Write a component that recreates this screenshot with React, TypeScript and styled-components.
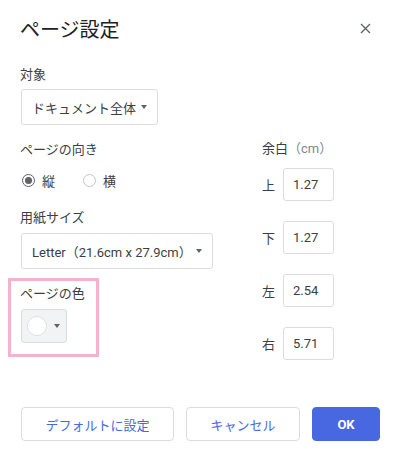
import React from 'react'
import styled, { createGlobalStyle } from 'styled-components'

const GlobalStyle = createGlobalStyle`
  html, body {
    margin: 0;
    padding: 0;
    background: #fff;
  }
  body {
    font-family: Roboto, "Noto Sans CJK JP", "Noto Sans", sans-serif;
    color: #3c4043;
  }
`

const Dialog = styled.div`
  width: 400px;
  height: 457px;
  box-sizing: border-box;
  padding: 0 20px;
  background: #fff;
`

const Header = styled.div`
  display: flex;
  justify-content: space-between;
  align-items: flex-start;
  padding-top: 18px;
`

const Title = styled.h1`
  margin: 0;
  font-size: 20px;
  line-height: 24px;
  font-weight: 400;
  color: #202124;
`

const CloseButton = styled.button`
  width: 14px;
  height: 14px;
  margin: 3px 8px 0 0;
  padding: 0;
  border: none;
  background: none;
  display: flex;
  align-items: center;
  justify-content: center;
  cursor: pointer;
`

const Body = styled.div`
  display: flex;
  margin-top: 24px;
`

const LeftColumn = styled.div`
  width: 242px;
  display: flex;
  flex-direction: column;
  align-items: flex-start;
`

const RightColumn = styled.div`
  padding-top: 74px;
  display: flex;
  flex-direction: column;
`

const Label = styled.div<{ $top?: number }>`
  font-size: 13px;
  line-height: 18px;
  color: #3c4043;
  margin-top: ${p => p.$top ?? 0}px;
`

const Muted = styled.span`
  color: #80868b;
`

const Select = styled.div<{ $width: number; $top: number }>`
  width: ${p => p.$width}px;
  height: 36px;
  margin-top: ${p => p.$top}px;
  margin-left: 1px;
  box-sizing: border-box;
  border: 1px solid #dadce0;
  border-radius: 3px;
  padding: 0 10px 0 10px;
  display: flex;
  align-items: center;
  justify-content: space-between;
  font-size: 13px;
  color: #3c4043;
`

const Caret = styled.span`
  width: 0;
  height: 0;
  border-left: 3.5px solid transparent;
  border-right: 3.5px solid transparent;
  border-top: 4px solid #5f6368;
`

const RadioRow = styled.div`
  display: flex;
  align-items: center;
  height: 20px;
  margin-top: 11px;
  padding-left: 2px;
`

const RadioOption = styled.label`
  display: flex;
  align-items: center;
  gap: 7px;
  font-size: 13px;
  color: #3c4043;
  & + & {
    margin-left: 28px;
  }
`

const RadioCircle = styled.span<{ $checked?: boolean }>`
  width: 13px;
  height: 13px;
  box-sizing: border-box;
  border-radius: 50%;
  border: 1px solid ${p => (p.$checked ? '#5f6368' : '#c4c7c5')};
  display: flex;
  align-items: center;
  justify-content: center;
  &::after {
    content: '';
    width: 7px;
    height: 7px;
    border-radius: 50%;
    background: ${p => (p.$checked ? '#5f6368' : 'transparent')};
  }
`

const Highlight = styled.div`
  width: 91px;
  margin-top: 9px;
  margin-left: -12px;
  box-sizing: border-box;
  border: 3px solid #f4b3cc;
  padding: 4px 9px 11px 9px;
`

const ColorButton = styled.div`
  width: 46px;
  height: 34px;
  margin-top: 6px;
  margin-left: 1px;
  box-sizing: border-box;
  background: #f1f3f4;
  border: 1px solid #dadce0;
  border-radius: 3px;
  display: flex;
  align-items: center;
  padding-left: 5px;
  gap: 7px;
`

const Swatch = styled.span`
  width: 20px;
  height: 20px;
  box-sizing: border-box;
  border-radius: 50%;
  background: #fff;
  border: 1px solid #e0e0e0;
`

const MarginRow = styled.div`
  display: flex;
  align-items: center;
  margin-top: 10px;
  & + & {
    margin-top: 20px;
  }
`

const MarginLabel = styled.span`
  width: 21px;
  font-size: 13px;
  color: #3c4043;
`

const MarginInput = styled.div`
  width: 51px;
  height: 33px;
  box-sizing: border-box;
  border: 1px solid #dadce0;
  border-radius: 3px;
  padding-left: 9px;
  display: flex;
  align-items: center;
  font-size: 13px;
  color: #3c4043;
`

const Footer = styled.div`
  display: flex;
  justify-content: flex-end;
  gap: 12px;
  margin-top: 47px;
`

const Button = styled.button<{ $width: number; $primary?: boolean }>`
  width: ${p => p.$width}px;
  height: 34px;
  box-sizing: border-box;
  border-radius: 4px;
  border: 1px solid ${p => (p.$primary ? '#4868e1' : '#dadce0')};
  background: ${p => (p.$primary ? '#4868e1' : '#fff')};
  color: ${p => (p.$primary ? '#fff' : '#4868e1')};
  font-family: Roboto, "Noto Sans CJK JP", sans-serif;
  font-size: 13px;
  font-weight: ${p => (p.$primary ? 700 : 400)};
  padding: 0;
  cursor: pointer;
`

const margins = [
  { side: '上', value: '1.27' },
  { side: '下', value: '1.27' },
  { side: '左', value: '2.54' },
  { side: '右', value: '5.71' },
]

export default function App() {
  return (
    <>
      <GlobalStyle />
      <Dialog>
        <Header>
          <Title>ページ設定</Title>
          <CloseButton aria-label="閉じる">
            <svg width="11" height="11" viewBox="0 0 11 11">
              <path d="M1 1L10 10M10 1L1 10" stroke="#5f6368" strokeWidth="1.4" />
            </svg>
          </CloseButton>
        </Header>

        <Body>
          <LeftColumn>
            <Label>対象</Label>
            <Select $width={137} $top={5}>
              <span>ドキュメント全体</span>
              <Caret />
            </Select>

            <Label $top={16}>ページの向き</Label>
            <RadioRow>
              <RadioOption>
                <RadioCircle $checked />
                縦
              </RadioOption>
              <RadioOption>
                <RadioCircle />
                横
              </RadioOption>
            </RadioRow>

            <Label $top={19}>用紙サイズ</Label>
            <Select $width={192} $top={6}>
              <span>Letter（21.6cm x 27.9cm）</span>
              <Caret />
            </Select>

            <Highlight>
              <Label>ページの色</Label>
              <ColorButton>
                <Swatch />
                <Caret />
              </ColorButton>
            </Highlight>
          </LeftColumn>

          <RightColumn>
            <Label>
              余白<Muted>（cm）</Muted>
            </Label>
            {margins.map(m => (
              <MarginRow key={m.side}>
                <MarginLabel>{m.side}</MarginLabel>
                <MarginInput>{m.value}</MarginInput>
              </MarginRow>
            ))}
          </RightColumn>
        </Body>

        <Footer>
          <Button $width={153}>デフォルトに設定</Button>
          <Button $width={114}>キャンセル</Button>
          <Button $width={68} $primary>OK</Button>
        </Footer>
      </Dialog>
    </>
  )
}
